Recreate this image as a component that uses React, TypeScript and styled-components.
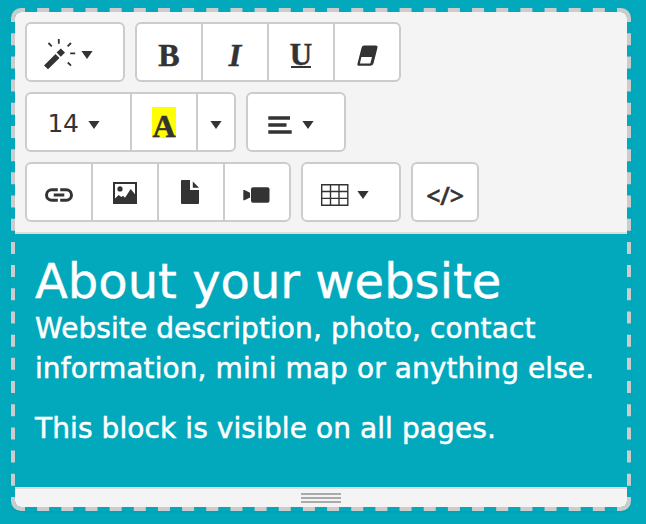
import React from 'react';
import styled, { createGlobalStyle } from 'styled-components';

const teal = '#02a9bd';
const ink = '#333';
const line = '#ccc';

const GlobalStyle = createGlobalStyle`
  * { box-sizing: border-box; }
  body { margin: 0; background: ${teal}; }
`;

const Page = styled.main`
  width: 646px;
  height: 524px;
  padding: 8px 15px 13px 11px;
  background: ${teal};
  overflow: hidden;
`;

const Frame = styled.section`
  position: relative;
  width: 620px;
  height: 503px;
  padding: 4px;
  border-radius: 10px;
  box-shadow: 0 1px 2px rgba(0, 0, 0, 0.08);
`;

const DashedOutline = styled.svg`
  position: absolute;
  inset: 0;
  pointer-events: none;
  fill: none;
  stroke: ${line};
  stroke-width: 4;
`;

const Editor = styled.div`
  display: flex;
  flex-direction: column;
  height: 495px;
  border-radius: 6px;
  overflow: hidden;
`;

const Toolbar = styled.div`
  display: flex;
  flex-direction: column;
  gap: 10px;
  height: 222px;
  padding: 10px;
  background: #f4f4f4;
  border-bottom: 2px solid #ddd;
`;

const Row = styled.div`
  display: flex;
  gap: 10px;
`;

const Group = styled.div`
  display: flex;
`;

const Button = styled.button<{ $width?: number; $menu?: boolean }>`
  display: flex;
  align-items: center;
  justify-content: ${(p) => (p.$menu ? 'flex-start' : 'center')};
  width: ${(p) => p.$width ?? 68}px;
  height: 60px;
  margin: 0;
  padding: 0 ${(p) => (p.$menu ? 16 : 0)}px;
  background: #fff;
  border: 2px solid ${line};
  color: ${ink};
  & + & { margin-left: -2px; }
  &:first-child { border-top-left-radius: 6px; border-bottom-left-radius: 6px; }
  &:last-child { border-top-right-radius: 6px; border-bottom-right-radius: 6px; }
`;

const Icon = styled.svg.attrs({ width: 32, height: 32, viewBox: '0 0 32 32' })`
  flex: none;
  overflow: visible;
  fill: ${ink};
`;

const CaretShape = styled.svg<{ $gap: number }>`
  flex: none;
  margin: 6px 0 0 ${(p) => p.$gap}px;
  fill: ${ink};
`;

const Caret = ({ gap = 0 }: { gap?: number }) => (
  <CaretShape $gap={gap} width="12" height="8" viewBox="0 0 12 8">
    <path d="M.4 0H11.6L6 8Z" />
  </CaretShape>
);

const Glyph = styled.span<{ $italic?: boolean; $size?: number }>`
  font: ${(p) => (p.$italic ? 'italic' : 'normal')} bold ${(p) => p.$size ?? 32}px/36px 'Liberation Serif', serif;
  -webkit-text-stroke: 0.5px ${ink};
  margin-top: 5px;
`;

const Underlined = styled(Glyph)`
  width: 20px;
  height: 26px;
  display: flex;
  justify-content: center;
  line-height: 26px;
  margin-top: 5px;
  border-bottom: 2px solid ${ink};
`;

const Highlight = styled.span`
  width: 24px;
  height: 31px;
  margin-top: 1px;
  background: #ff0;
  display: flex;
  justify-content: center;
`;

const HighlightLetter = styled(Glyph)`
  margin-top: 1px;
`;

const FontSize = styled.span`
  width: 32px;
  margin: 3px 0 0 4px;
  font: 25px/30px 'DejaVu Sans', Verdana, sans-serif;
  letter-spacing: -0.5px;
`;

const Code = styled.span`
  font: 500 25px/30px 'Noto Sans', sans-serif;
  letter-spacing: -0.3px;
  -webkit-text-stroke: 0.5px ${ink};
  margin-top: 5px;
`;

const Content = styled.article`
  flex: 1;
  padding: 24px 20px 0;
  color: #fff;
  font: 28px/40px 'DejaVu Sans', Verdana, sans-serif;
  white-space: nowrap;
`;

const Title = styled.h1`
  margin: 0 0 5px;
  font-size: 48px;
  font-weight: 400;
  line-height: 46px;
  -webkit-text-stroke: 0.4px #fff;
`;

const Paragraph = styled.p`
  margin: 0 0 20px;
  letter-spacing: 0.09px;
  -webkit-text-stroke: 0.5px #fff;
`;

const ResizeBar = styled.footer`
  display: flex;
  flex-direction: column;
  align-items: center;
  gap: 2px;
  height: 20px;
  padding-top: 4px;
  background: #f4f4f4;
  border-top: 2px solid #ddd;
`;

const GripLine = styled.i`
  width: 40px;
  height: 2px;
  background: #aaa;
`;

export default function App() {
  return (
    <>
      <GlobalStyle />
      <Page>
        <Frame>
          <Editor>
            <Toolbar>
              <Row>
                <Group>
                  <Button $width={100} $menu aria-label="Style">
                    <Icon>
                      <path d="M1 29.5 12.5 18 16.5 22 5 33.3ZM17.8 12.4 22 16.6 17.8 20.8 13.6 16.6Z" />
                      <path
                        d="M15.8 3V7.8M5.4 7 8.8 10.4M28 7 24.6 10.4M27.2 17.3H32.2M24.8 26.5 28 29.7"
                        stroke={ink}
                        strokeWidth="1.8"
                      />
                    </Icon>
                    <Caret gap={6} />
                  </Button>
                </Group>
                <Group>
                  <Button><Glyph>B</Glyph></Button>
                  <Button><Glyph $italic>I</Glyph></Button>
                  <Button><Underlined $size={31}>U</Underlined></Button>
                  <Button aria-label="Clear formatting">
                    <Icon>
                      <path
                        fillRule="evenodd"
                        d="M13.2 9.6H24.7Q27 9.6 26.4 12L22.6 27Q21.9 29.8 19.5 29.8H8Q5.9 29.8 6.5 27.4L10.5 12Q11.1 9.6 13.2 9.6ZM10.4 21 8.9 27.6H19.3L21 21Z"
                      />
                    </Icon>
                  </Button>
                </Group>
              </Row>
              <Row>
                <Group>
                  <Button $width={107} $menu>
                    <FontSize>14</FontSize>
                    <Caret gap={9} />
                  </Button>
                  <Button><Highlight><HighlightLetter>A</HighlightLetter></Highlight></Button>
                  <Button $width={40} aria-label="More colors"><Caret /></Button>
                </Group>
                <Group>
                  <Button $width={100} $menu aria-label="Paragraph">
                    <Icon>
                      <path d="M4.3 10.3H26V13.7H4.3ZM4.3 17.3H22.5V20.7H4.3ZM4.3 24.3H27.7V27.7H4.3Z" />
                    </Icon>
                    <Caret gap={6} />
                  </Button>
                </Group>
              </Row>
              <Row>
                <Group>
                  <Button aria-label="Link">
                    <Icon>
                      <path
                        d="M14.8 13.7H8.8A5.3 5.3 0 0 0 8.8 24.3H14.8M17.2 13.7H23.2A5.3 5.3 0 0 1 23.2 24.3H17.2M10.7 19H21.3"
                        fill="none"
                        stroke={ink}
                        strokeWidth="3"
                      />
                    </Icon>
                  </Button>
                  <Button aria-label="Picture">
                    <Icon>
                      <rect x="5" y="7" width="22" height="20" fill="none" stroke={ink} strokeWidth="2" />
                      <circle cx="11" cy="12.9" r="2.6" />
                      <path d="M6 22.5 9.7 19 12.3 21 14 19.8 16 21.8 21.7 13 27 19.5V27H6Z" />
                    </Icon>
                  </Button>
                  <Button aria-label="File">
                    <Icon>
                      <path d="M7 4H15V14H24V27Q24 28 23 28H7Q6 28 6 27V5Q6 4 7 4ZM17.8 5.6 24 11.8H17.8Z" />
                    </Icon>
                  </Button>
                  <Button aria-label="Video">
                    <Icon>
                      <rect x="10" y="11.2" width="18.5" height="15.5" rx="2" />
                      <path d="M2.3 14H3.5L9 16.7V21.5L3.5 24.2H2.3Z" />
                    </Icon>
                  </Button>
                </Group>
                <Group>
                  <Button $width={100} $menu aria-label="Table">
                    <Icon>
                      <path
                        d="M2.7 8.7H28.8V29.3H2.7ZM11.5 8.7V29.3M20 8.7V29.3M2.7 15.5H28.8M2.7 22.4H28.8"
                        fill="none"
                        stroke={ink}
                        strokeWidth="1.4"
                      />
                    </Icon>
                    <Caret gap={6} />
                  </Button>
                </Group>
                <Group>
                  <Button><Code>&lt;/&gt;</Code></Button>
                </Group>
              </Row>
            </Toolbar>
            <Content>
              <Title>About your website</Title>
              <Paragraph>
                Website description, photo, contact
                <br />
                information, mini map or anything else.
              </Paragraph>
              <Paragraph>This block is visible on all pages.</Paragraph>
            </Content>
            <ResizeBar>
              <GripLine />
              <GripLine />
              <GripLine />
            </ResizeBar>
          </Editor>
          <DashedOutline width="620" height="503" viewBox="0 0 620 503">
            <path d="M26.16 2H594M26.16 501H594" strokeDasharray="12 12.16" />
            <path d="M2 25.19V478M618 25.19V478" strokeDasharray="12 11.19" />
            <path d="M14 2H10A8 8 0 0 0 2 10V14M606 2H610A8 8 0 0 1 618 10V14M14 501H10A8 8 0 0 1 2 493V489M606 501H610A8 8 0 0 0 618 493V489" />
          </DashedOutline>
        </Frame>
      </Page>
    </>
  );
}
